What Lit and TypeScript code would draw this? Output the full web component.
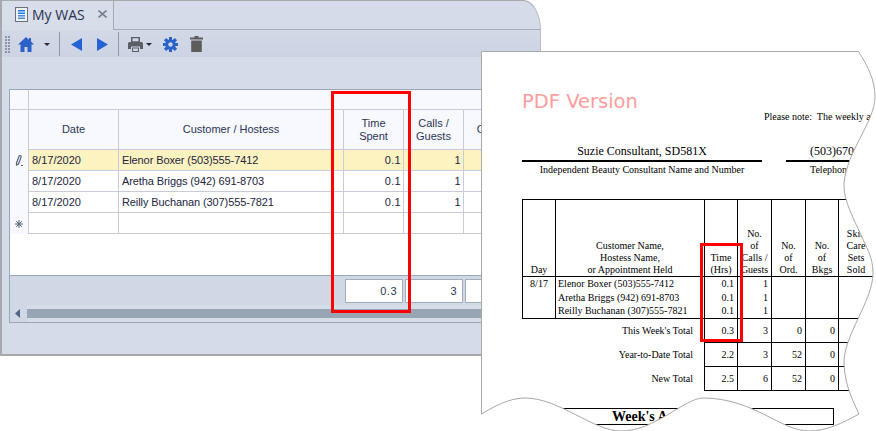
import { LitElement, html, css, svg, unsafeCSS } from "lit";
import { customElement } from "lit/decorators.js";

const PAPER = "M0.5,0.5 L377.5,0.5 C386,14 394,28 394,46 C394,70 366,100 363,132 C362,150 374,170 381,186 C384,194 392,205 392,222 C392,250 362,285 363,313 C364,335 372,350 378,363 C362,372 345,380 328,380 C300,380 272,347 222,347 C204,347 174,380 140,380 C112,380 78,347 44,347 C28,347 12,356 0.5,363 Z";

const rows = [
  { date: "8/17/2020", name: "Elenor Boxer (503)555-7412", sel: true },
  { date: "8/17/2020", name: "Aretha Briggs (942) 691-8703", sel: false },
  { date: "8/17/2020", name: "Reilly Buchanan (307)555-7821", sel: false },
];

const caret = html`<svg class="caret" width="6" height="3" viewBox="0 0 6 3"><path d="M0 0h6L3 3z" fill="#222b3a"/></svg>`;

const gearTeeth = [0, 45, 90, 135, 180, 225, 270, 315].map(
  (a) => svg`<rect x="6" y="0" width="3" height="15" fill="#2a62c9" transform="rotate(${a} 7.5 7.5)"/>`
);

@customElement("app-root")
export class AppRoot extends LitElement {
  static styles = css`
    :host { display: block; width: 876px; height: 431px; background: #fff; overflow: hidden; }
    .stage { position: relative; width: 876px; height: 431px; overflow: hidden; font-family: "Liberation Sans", Arial, sans-serif; font-size: 11px; color: #1c2540; }
    .win { width: 541px; height: 356px; box-sizing: border-box; border: 1px solid #a6a8ae; border-left-width: 2px; border-bottom-width: 2px; border-right-color: #b8bcc8; border-top-right-radius: 18px 30px; background: #d5dbe8; display: flex; flex-direction: column; overflow: hidden; }
    .strip { height: 29px; display: flex; flex: none; }
    .tab { width: 112px; box-sizing: border-box; border-right: 1px solid #a3a9b6; display: flex; align-items: flex-start; background: #d8ddea; }
    .tab .doc { margin: 6px 0 0 13px; flex: none; }
    .tab .lbl { margin: 4px 0 0 4px; font-family: "Open Sans", sans-serif; font-size: 14px; line-height: 19px; color: #2a3350; }
    .tab .x { margin: 9px 0 0 13px; flex: none; }
    .fill { flex: 1; border-bottom: 1px solid #a3a9b6; }
    .toolbar { margin-top: 1px; height: 26px; flex: none; display: flex; align-items: center; background: linear-gradient(#d2d8e6, #ccd3e2); }
    .grip { margin-left: 3px; width: 6px; height: 17px; background-image: radial-gradient(circle at 1px 1px, #8d96a8 0.8px, transparent 1px); background-size: 3px 3px; }
    .home { margin-left: 7px; }
    .caret { flex: none; display: block; }
    .c1 { margin-left: 10px; }
    .sep { width: 1px; height: 24px; background: #8f96a4; flex: none; }
    .s1 { margin-left: 9px; }
    .prev { margin-left: 11px; }
    .next { margin-left: 15px; }
    .s2 { margin-left: 10px; }
    .print { margin-left: 9px; }
    .c2 { margin-left: 3px; }
    .gear { margin-left: 11px; }
    .trash { margin-left: 12px; }
    .body { flex: 1; padding: 32px 0 0 7px; }
    .grid { width: 600px; height: 234px; box-sizing: border-box; border: 1px solid #9aa5b8; border-right: 0; background: #fff; display: flex; flex-direction: column; }
    .row { display: grid; grid-template-columns: 19px 90px 225px 60px 60px 60px 60px; flex: none; }
    .row > div { box-sizing: border-box; border-right: 1px solid #c8cbdb; border-bottom: 1px solid #c8cbdb; display: flex; align-items: center; }
    .band { height: 20px; grid-template-columns: 19px 1fr; background: #f8f9fe; }
    .band > div:last-child { border-right: 0; }
    .head { height: 40px; background: #f8f9fe; }
    .head > div { justify-content: center; text-align: center; line-height: 13px; color: #2a3556; }
    .data { height: 21px; }
    .data > div { padding: 0 3px; }
    .data .nm { letter-spacing: -0.1px; }
    .data .num { justify-content: flex-end; padding-right: 2px; letter-spacing: 0.3px; }
    .data.sel { background: #fdf3c0; }
    .row > .ind { background: #f8f9fe; border-bottom: 0; justify-content: center; padding: 0; }
    .space { flex: 1; }
    .foot { flex: none; height: 30px; box-sizing: border-box; border-top: 1px solid #9aa5b8; background: #d0d7e5; display: flex; gap: 2px; padding: 3px 0 0 335px; }
    .box { width: 58px; height: 24px; box-sizing: border-box; border: 1px solid #a3acbd; background: #fff; display: flex; align-items: center; justify-content: flex-end; padding-right: 5px; letter-spacing: 0.5px; color: #2a3556; }
    .scroll { flex: none; height: 17px; display: flex; align-items: center; background: #d0d7e5; }
    .arrow { margin-left: 5px; flex: none; }
    .track { margin-left: 7px; flex: 1; height: 17px; display: flex; align-items: center; background: #d6dce8; }
    .thumb { flex: 1; height: 9px; background: #98a5b5; }
    .red { position: absolute; box-sizing: border-box; border: 3px solid #f00; pointer-events: none; }
    .r1 { left: 331px; top: 91px; width: 80px; height: 222px; }
    .r2 { left: 700px; top: 243px; width: 43px; height: 99px; }
    .paper { position: absolute; left: 481px; top: 51px; width: 395px; height: 380px; background: #fff; clip-path: path("${unsafeCSS(PAPER)}"); }
    .outline { position: absolute; left: 481px; top: 51px; pointer-events: none; }
    .sheet { font-family: "Liberation Serif", "Times New Roman", serif; font-size: 10px; color: #000; padding-left: 41px; width: 500px; }
    .title { font-family: "DejaVu Sans", sans-serif; font-size: 19.5px; line-height: 22px; color: #ff9c9c; padding-top: 40px; }
    .note { padding-left: 242px; line-height: 12px; margin-top: -2px; white-space: nowrap; }
    .sig { display: flex; margin-top: 21px; }
    .sigc { text-align: center; }
    .sigc .v { font-size: 12px; line-height: 14px; padding-bottom: 2px; border-bottom: 2px solid #000; }
    .sigc .k { line-height: 12px; margin-top: 2px; }
    .a { width: 240px; }
    .b { width: 130px; margin-left: 24px; text-align: left; }
    .b .v, .b .k { padding-left: 24px; }
    .form { border-collapse: collapse; table-layout: fixed; width: 385px; margin-top: 23px; }
    .form td { border: 1px solid #000; padding: 0; vertical-align: bottom; text-align: center; line-height: 12px; overflow: hidden; white-space: nowrap; }
    .form tr.h { height: 77px; }
    .form tr.e td { line-height: 13.5px; height: 13.5px; vertical-align: middle; border-top: 0; border-bottom: 0; }
    .form tr.e td.day { vertical-align: top; border-bottom: 1px solid #000; }
    .form tr.e td.nm { text-align: left; padding-left: 2px; }
    .form td.n { text-align: right; padding-right: 3px; }
    .form tr.l td { border-bottom: 1px solid #000; }
    .form tr.t { height: 24px; }
    .form tr.t td { vertical-align: middle; padding-top: 2px; }
    .form tr.t td.lab { border: 0; border-top: 1px solid #000; border-right: 1px solid #000; text-align: right; padding-right: 11px; }
    .form tr.t + tr.t td.lab { border-top: 0; }
    .wk { margin: 17px 0 0 82px; width: 271px; height: 17px; box-sizing: border-box; border: 1px solid #000; font-family: "Liberation Serif", serif; font-size: 14px; font-weight: 700; line-height: 16px; padding-left: 48px; color: #000; white-space: nowrap; }
  `;

  render() {
    return html`<div class="stage">
      <div class="win">
        <div class="strip">
          <div class="tab">
            <svg class="doc" width="13" height="15" viewBox="0 0 13 15">
              <rect x="0.5" y="0.5" width="12" height="14" fill="#eef1f6" stroke="#6d7078"/>
              <path d="M3 3h7v1.500H3z M3 5.500h7v1.500H3z" fill="#1f7fe0"/>
              <path d="M3 8h7v1.500H3z M3 10.500h7v1.500H3z" fill="#4a8fd0"/>
            </svg>
            <span class="lbl">My WAS</span>
            <svg class="x" width="9" height="8" viewBox="0 0 9 8"><path d="M0.500 0.500l8 7M8.500 0.500l-8 7" stroke="#7a8090" stroke-width="1.600"/></svg>
          </div>
          <div class="fill"></div>
        </div>
        <div class="toolbar">
          <div class="grip"></div>
          <svg class="home" width="16" height="15" viewBox="0 0 16 15"><path d="M8 0L0 7.500h2.500V15h4v-5h3v5h4V7.500H16L13 4.600V1h-2v1.700z" fill="#2a62c9"/></svg>
          <span class="c1">${caret}</span>
          <div class="sep s1"></div>
          <svg class="prev" width="11" height="13" viewBox="0 0 11 13"><path d="M11 0v13L0 6.500z" fill="#2563d4"/></svg>
          <svg class="next" width="11" height="13" viewBox="0 0 11 13"><path d="M0 0v13l11-6.500z" fill="#2563d4"/></svg>
          <div class="sep s2"></div>
          <svg class="print" width="15" height="15" viewBox="0 0 15 15"><path d="M3 0h9v5H3zM4.500 1.300v3h6v-3z" fill="#5a5f66" fill-rule="evenodd"/><path d="M1.500 5h12A1.500 1.500 0 0 1 15 6.500V12h-3V9.500H3V12H0V6.500A1.500 1.500 0 0 1 1.500 5z" fill="#5a5f66"/><path d="M4 10.500h7V15H4z M5 11.500v2.500h5v-2.500z" fill="#5a5f66" fill-rule="evenodd"/></svg>
          <span class="c2">${caret}</span>
          <svg class="gear" width="15" height="15" viewBox="0 0 15 15">${gearTeeth}<circle cx="7.500" cy="7.500" r="5.200" fill="#2a62c9"/><circle cx="7.500" cy="7.500" r="2.200" fill="#ced5e3"/></svg>
          <svg class="trash" width="13" height="16" viewBox="0 0 13 16"><path d="M4.500 0h4v1.500h4.500v2H0v-2h4.500z" fill="#5c5c5c"/><path d="M1.200 4.500h10.600V16H1.200z" fill="#5c5c5c"/></svg>
        </div>
        <div class="body">
          <div class="grid">
            <div class="row band"><div></div><div></div></div>
            <div class="row head">
              <div class="ind"></div><div>Date</div><div>Customer / Hostess</div><div>Time<br />Spent</div><div>Calls /<br />Guests</div><div>Orders</div><div></div>
            </div>
            ${rows.map(
              (r) => html`<div class="row data ${r.sel ? "sel" : ""}">
                <div class="ind">${r.sel
                  ? html`<svg width="8" height="11" viewBox="0 0 8 11"><path d="M1.500 8L4 1.200Q4.800 0.200 5.600 0.800T6 2.400L3.500 9L1.500 10z" fill="none" stroke="#566075" stroke-width="1.200"/><path d="M6 10h2v1H6z" fill="#566075"/></svg>`
                  : ""}</div>
                <div>${r.date}</div><div class="nm">${r.name}</div><div class="num">0.1</div><div class="num">1</div><div></div><div></div>
              </div>`
            )}
            <div class="row data">
              <div class="ind"><svg width="8" height="8" viewBox="0 0 8 8"><path d="M4 0v8M0 4h8M1.200 1.200l5.600 5.600M6.800 1.200L1.200 6.800" stroke="#566075" stroke-width="1"/></svg></div>
              <div></div><div></div><div></div><div></div><div></div><div></div>
            </div>
            <div class="space"></div>
            <div class="foot"><div class="box">0.3</div><div class="box">3</div><div class="box"></div></div>
            <div class="scroll">
              <svg class="arrow" width="5" height="9" viewBox="0 0 5 9"><path d="M5 0v9L0 4.500z" fill="#4d6685"/></svg>
              <div class="track"><div class="thumb"></div></div>
            </div>
          </div>
        </div>
      </div>
      <div class="red r1"></div>
      <div class="paper">
        <div class="sheet">
          <div class="title">PDF Version</div>
          <div class="note">Please note:&nbsp; The weekly accomplishments</div>
          <div class="sig">
            <div class="sigc a"><div class="v">Suzie Consultant, SD581X</div><div class="k">Independent Beauty Consultant Name and Number</div></div>
            <div class="sigc b"><div class="v">(503)670-1234</div><div class="k">Telephone Number</div></div>
          </div>
          <table class="form">
            <colgroup><col style="width:33px" /><col style="width:149px" /><col style="width:33px" /><col style="width:34px" /><col style="width:34px" /><col style="width:33px" /><col style="width:35px" /><col style="width:34px" /></colgroup>
            <tr class="h">
              <td>Day</td><td>Customer Name,<br />Hostess Name,<br />or Appointment Held</td><td>Time<br />(Hrs)</td><td>No.<br />of<br />Calls /<br />Guests</td><td>No.<br />of<br />Ord.</td><td>No.<br />of<br />Bkgs</td><td>Skin<br />Care<br />Sets<br />Sold</td><td></td>
            </tr>
            <tr class="e"><td class="day" rowspan="3">8/17</td><td class="nm">Elenor Boxer (503)555-7412</td><td class="n">0.1</td><td class="n">1</td><td></td><td></td><td></td><td></td></tr>
            <tr class="e"><td class="nm">Aretha Briggs (942) 691-8703</td><td class="n">0.1</td><td class="n">1</td><td></td><td></td><td></td><td></td></tr>
            <tr class="e l"><td class="nm">Reilly Buchanan (307)555-7821</td><td class="n">0.1</td><td class="n">1</td><td></td><td></td><td></td><td></td></tr>
            <tr class="t"><td class="lab" colspan="2">This Week's Total</td><td class="n">0.3</td><td class="n">3</td><td class="n">0</td><td class="n">0</td><td></td><td></td></tr>
            <tr class="t"><td class="lab" colspan="2">Year-to-Date Total</td><td class="n">2.2</td><td class="n">3</td><td class="n">52</td><td class="n">0</td><td></td><td></td></tr>
            <tr class="t"><td class="lab" colspan="2">New Total</td><td class="n">2.5</td><td class="n">6</td><td class="n">52</td><td class="n">0</td><td></td><td></td></tr>
          </table>
        </div>
        <div class="wk">Week's Activity</div>
      </div>
      <svg class="outline" width="395" height="380" viewBox="0 0 395 380"><path d="${PAPER}" fill="none" stroke="#a8a8a8" stroke-width="1"/></svg>
      <div class="red r2"></div>
    </div>`;
  }
}
